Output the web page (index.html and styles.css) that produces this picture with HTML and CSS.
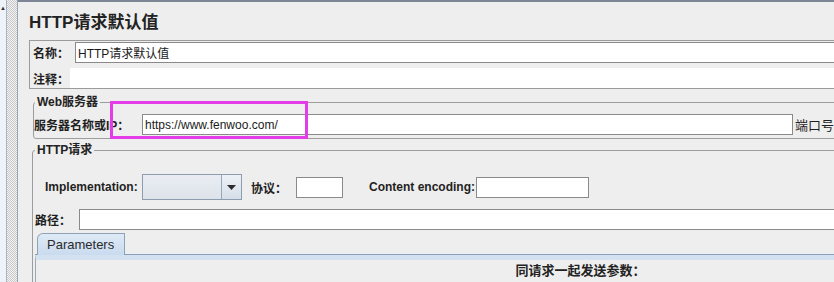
FILE: index.html
```html
<!DOCTYPE html>
<html lang="zh-CN">
<head>
  <meta charset="UTF-8">
  <title>HTTP请求默认值</title>
  <link rel="stylesheet" href="styles.css">
</head>
<body>
  <div class="app">
    <div class="tree"><span class="tree-arrow">▲</span></div>
    <div class="splitter"></div>

    <div class="main">
      <h1>HTTP请求默认值</h1>

      <div class="name-panel">
        <div class="row">
          <label class="name-label">名称：</label>
          <input type="text" class="field grow" value="HTTP请求默认值">
        </div>
        <div class="row comment-row">
          <label class="comment-label">注释：</label>
          <div class="comment-field"></div>
        </div>
      </div>

      <fieldset class="group web-group">
        <legend>Web服务器</legend>
        <div class="row">
          <label class="server-label">服务器名称或IP：</label>
          <input type="text" class="field server-input" value="https://www.fenwoo.com/">
          <span class="port-label">端口号：</span>
          <input type="text" class="field port-input">
        </div>
      </fieldset>

      <fieldset class="group http-group">
        <legend>HTTP请求</legend>
        <div class="row impl-row">
          <label class="impl-label">Implementation:</label>
          <div class="combo">
            <div class="combo-value"></div>
            <div class="combo-btn">
              <svg width="9" height="5" viewBox="0 0 9 5"><polygon points="0,0 9,0 4.5,5" fill="#2b2b2b"/></svg>
            </div>
          </div>
          <label class="proto-label">协议：</label>
          <input type="text" class="field proto-input">
          <label class="enc-label">Content encoding:</label>
          <input type="text" class="field enc-input">
        </div>

        <div class="row path-row">
          <label class="path-label">路径：</label>
          <input type="text" class="field grow">
        </div>

        <div class="tabs">
          <div class="tab">Parameters</div>
        </div>
        <div class="tab-panel">
          <div class="params-title">同请求一起发送参数：</div>
        </div>
      </fieldset>

      <div class="highlight"></div>
    </div>
  </div>
</body>
</html>
```

FILE: styles.css
```css
* {
  box-sizing: border-box;
}
body {
  margin: 0;
  width: 834px;
  height: 282px;
  overflow: hidden;
  font-family: "Liberation Sans", "Noto Sans CJK SC", sans-serif;
  font-size: 12px;
  color: #1f1f1f;
  background: #eeeeee;
}
.app {
  display: flex;
  height: 282px;
}

/* left tree + splitter */
.tree {
  width: 7px;
  flex-shrink: 0;
  background: #eef3f9;
  border-right: 1px solid #a6b4c6;
}
.tree-arrow {
  display: block;
  font-size: 6px;
  line-height: 8px;
  padding: 4px 0 0 0;
  color: #333;
}
.splitter {
  width: 11px;
  flex-shrink: 0;
  background: repeating-conic-gradient(#c9c9c9 0 25%, #f3f3f3 0 50%) 0 0 / 2px 2px;
  border-right: 1px solid #9aa5b4;
}

/* main editor */
.main {
  position: relative;
  width: 1124px;
  flex-shrink: 0;
  padding: 0 11px;
  border-top: 2px solid #7c8696;
}
h1 {
  margin: 0 0 7px;
  padding-top: 11px;
  font-size: 17px;
  line-height: 20px;
  font-weight: bold;
  color: #222;
}
.row {
  display: flex;
  align-items: center;
}
label,
.port-label {
  font-weight: bold;
  white-space: nowrap;
}
.field {
  height: 21px;
  border: 1px solid #8a8a8a;
  background: white;
  padding: 0 2px;
  font-family: "Liberation Sans", "Noto Sans CJK SC", sans-serif;
  font-size: 12px;
  color: #1a1a1a;
  outline: none;
}
.grow {
  flex: 1;
  min-width: 0;
}

/* name / comment */
.name-panel {
  border: 1px solid #9b9b9b;
  padding: 1px 2px 0 3px;
}
.name-label {
  width: 42px;
}
.comment-row {
  margin-top: 5px;
}
.comment-label {
  width: 37px;
}
.comment-field {
  flex: 1;
  height: 20px;
  background: white;
}

/* titled groups */
.group {
  border: 1px solid #9d9d9d;
  border-radius: 3px;
  min-width: 0;
}
.group legend {
  font-weight: bold;
  line-height: 14px;
  padding: 0 2px;
  color: #222;
}
.web-group {
  margin: 6px 4px 0;
  padding: 5px 0 3px 0;
}
.web-group legend {
  margin-left: 1px;
}
.server-label {
  width: 108px;
}
.server-input {
  width: 651px;
}
.port-label {
  margin-left: 2px;
  margin-right: 2px;
  font-weight: normal;
  font-size: 13px;
}
.port-input {
  width: 80px;
}
.http-group {
  margin: 4px 3px 0;
  padding: 17px 2px 0;
  height: 200px;
}

/* implementation row */
.impl-row {
  margin-left: 10px;
}
.impl-label {
  width: 97px;
}
.combo {
  display: flex;
  width: 100px;
  height: 26px;
  border: 1px solid #8e9cb0;
  background: linear-gradient(#e9edf3, #dde3ea);
}
.combo-value {
  flex: 1;
}
.combo-btn {
  width: 20px;
  border-left: 1px solid #9aa7b8;
  display: flex;
  align-items: center;
  justify-content: center;
  background: linear-gradient(#edf1f6, #d6dee8);
}
.proto-label {
  margin-left: 9px;
  width: 45px;
}
.proto-input {
  width: 47px;
}
.enc-label {
  margin-left: 26px;
  width: 107px;
}
.enc-input {
  width: 113px;
}

/* path */
.path-row {
  margin-top: 9px;
}
.path-label {
  width: 44px;
}

/* tabs */
.tabs {
  display: flex;
  margin-top: 3px;
  padding-left: 2px;
  border-bottom: 1px solid #8aa0ba;
}
.tab {
  position: relative;
  width: 88px;
  height: 22px;
  margin-bottom: -1px;
  padding: 3px 0 0 9px;
  border: 1px solid #8ea2ba;
  border-bottom: none;
  border-top-left-radius: 6px;
  background: linear-gradient(#dfeaf6, #c9dbef);
  font-size: 13px;
  color: #2a2a2a;
}
.tab-panel {
  border-left: 1px solid #98a9be;
  border-top: 5px solid #d3e1f0;
  min-height: 60px;
  padding-top: 3px;
}
.params-title {
  text-align: center;
  font-weight: bold;
  font-size: 13px;
  line-height: 16px;
  color: #222;
}

/* annotation box */
.highlight {
  position: absolute;
  left: 92px;
  top: 99px;
  width: 198px;
  height: 38px;
  border: 3px solid #e23de6;
}
```
